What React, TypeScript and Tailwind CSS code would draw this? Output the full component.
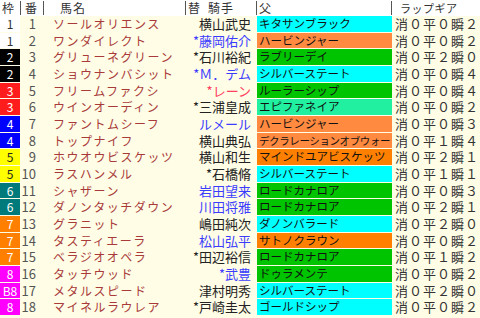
import React from 'react'

type Row = {
  waku: string
  ban: number
  name: string
  jockey: string
  jc: 'k' | 'b' | 'p'
  sire: string
  sc: string
  lap: string
}

const wakuStyle: Record<string, string> = {
  '1': 'bg-white text-[#333]',
  '2': 'bg-black text-white',
  '3': 'bg-[#ff1c1c] text-white',
  '4': 'bg-[#0000ff] text-white',
  '5': 'bg-[#ffff00] text-[#222]',
  '6': 'bg-[#007a7a] text-white',
  '7': 'bg-[#ff8000] text-white',
  '8': 'bg-[#ff00ff] text-white',
}

const jockeyColor = {
  k: 'text-[#222]',
  b: 'text-[#3c3cff]',
  p: 'text-[#ff4060]',
}

const CYAN = 'bg-[#00ffff]'
const SALMON = 'bg-[#ff8a40]'
const GREEN = 'bg-[#00c400]'
const AQUA = 'bg-[#20f0a0]'
const ORANGE = 'bg-[#ff8000]'

const rows: Row[] = [
  { waku: '1', ban: 1, name: 'ソールオリエンス', jockey: '横山武史', jc: 'k', sire: 'キタサンブラック', sc: CYAN, lap: '消０平０瞬２' },
  { waku: '1', ban: 2, name: 'ワンダイレクト', jockey: '*藤岡佑介', jc: 'b', sire: 'ハービンジャー', sc: SALMON, lap: '消０平０瞬２' },
  { waku: '2', ban: 3, name: 'グリューネグリーン', jockey: '*石川裕紀', jc: 'k', sire: 'ラブリーデイ', sc: GREEN, lap: '消０平２瞬０' },
  { waku: '2', ban: 4, name: 'ショウナンバシット', jockey: '*Ｍ．デム', jc: 'b', sire: 'シルバーステート', sc: CYAN, lap: '消０平０瞬４' },
  { waku: '3', ban: 5, name: 'フリームファクシ', jockey: '*レーン', jc: 'p', sire: 'ルーラーシップ', sc: GREEN, lap: '消０平０瞬４' },
  { waku: '3', ban: 6, name: 'ウインオーディン', jockey: '*三浦皇成', jc: 'k', sire: 'エピファネイア', sc: AQUA, lap: '消０平０瞬２' },
  { waku: '4', ban: 7, name: 'ファントムシーフ', jockey: 'ルメール', jc: 'b', sire: 'ハービンジャー', sc: SALMON, lap: '消０平０瞬３' },
  { waku: '4', ban: 8, name: 'トップナイフ', jockey: '横山典弘', jc: 'k', sire: 'デクラレーションオブウォー', sc: SALMON, lap: '消０平１瞬４' },
  { waku: '5', ban: 9, name: 'ホウオウビスケッツ', jockey: '横山和生', jc: 'k', sire: 'マインドユアビスケッツ', sc: ORANGE, lap: '消０平２瞬１' },
  { waku: '5', ban: 10, name: 'ラスハンメル', jockey: '*石橋脩', jc: 'k', sire: 'シルバーステート', sc: CYAN, lap: '消０平１瞬１' },
  { waku: '6', ban: 11, name: 'シャザーン', jockey: '岩田望来', jc: 'b', sire: 'ロードカナロア', sc: GREEN, lap: '消０平０瞬３' },
  { waku: '6', ban: 12, name: 'ダノンタッチダウン', jockey: '川田将雅', jc: 'b', sire: 'ロードカナロア', sc: GREEN, lap: '消０平２瞬１' },
  { waku: '7', ban: 13, name: 'グラニット', jockey: '嶋田純次', jc: 'k', sire: 'ダノンバラード', sc: CYAN, lap: '消０平２瞬０' },
  { waku: '7', ban: 14, name: 'タスティエーラ', jockey: '松山弘平', jc: 'b', sire: 'サトノクラウン', sc: ORANGE, lap: '消０平０瞬２' },
  { waku: '7', ban: 15, name: 'ベラジオオペラ', jockey: '*田辺裕信', jc: 'k', sire: 'ロードカナロア', sc: GREEN, lap: '消０平１瞬２' },
  { waku: '8', ban: 16, name: 'タッチウッド', jockey: '*武豊', jc: 'b', sire: 'ドゥラメンテ', sc: GREEN, lap: '消０平０瞬２' },
  { waku: 'B8', ban: 17, name: 'メタルスピード', jockey: '津村明秀', jc: 'k', sire: 'シルバーステート', sc: CYAN, lap: '消０平２瞬０' },
  { waku: '8', ban: 18, name: 'マイネルラウレア', jockey: '*戸崎圭太', jc: 'k', sire: 'ゴールドシップ', sc: CYAN, lap: '消０平０瞬２' },
]

const font = { fontFamily: '"Noto Sans CJK JP", "Noto Sans", sans-serif' }

export default function App() {
  return (
    <div className="w-[480px] h-[318px] overflow-hidden bg-[#fffde6]" style={font}>
      {/* header */}
      <div className="grid grid-cols-[21px_23px_142px_71px_135px_88px] h-[16px] bg-white text-[12px] leading-[16px] text-[#333]">
        <div className="border-r border-[#555] my-[1px] pl-[2px] leading-[14px]">枠</div>
        <div className="border-r border-[#555] border-l border-l-white my-[1px] pl-[3px] leading-[14px]">番</div>
        <div className="border-r border-[#555] my-[1px] pl-[16px] leading-[14px] tracking-[1px]">馬名</div>
        <div className="border-r border-[#555] my-[1px] pl-[2px] leading-[14px]">替<span className="ml-[8px] tracking-[1px]">騎手</span></div>
        <div className="border-r border-[#555] my-[1px] pl-[2px] leading-[14px]">父</div>
        <div className="my-[1px] pl-[8px] leading-[14px] text-[11px] tracking-[0.5px]">ラップギア</div>
      </div>

      {/* body */}
      {rows.map((r) => (
        <div
          key={r.ban}
          className="grid grid-cols-[21px_23px_142px_71px_135px_88px] h-[16.67px] leading-[16px]"
        >
          <div className={`${wakuStyle[r.waku.replace('B', '')]} w-[20px] mb-[1px] text-center text-[12px] leading-[15px]`}>
            {r.waku}
          </div>
          <div className="text-right pr-[8px] text-[13px] text-[#555]">{r.ban}</div>
          <div className="pl-[9px] text-[12px] tracking-[1.5px] text-[#a83a3a] whitespace-nowrap overflow-hidden">
            {r.name}
          </div>
          <div className={`${jockeyColor[r.jc]} text-right pr-[6px] text-[13px] whitespace-nowrap`}>
            {r.jockey}
          </div>
          <div
            className={`${r.sc} ${r.sire.length > 11 ? 'text-[10.5px] tracking-[-0.4px]' : 'text-[11.5px]'} mb-[1px] pl-[2px] leading-[15px] text-[#111] whitespace-nowrap overflow-hidden`}
          >
            {r.sire}
          </div>
          <div className="pl-[3px] text-[13px] tracking-[1px] text-[#333] whitespace-nowrap">{r.lap}</div>
        </div>
      ))}
    </div>
  )
}
